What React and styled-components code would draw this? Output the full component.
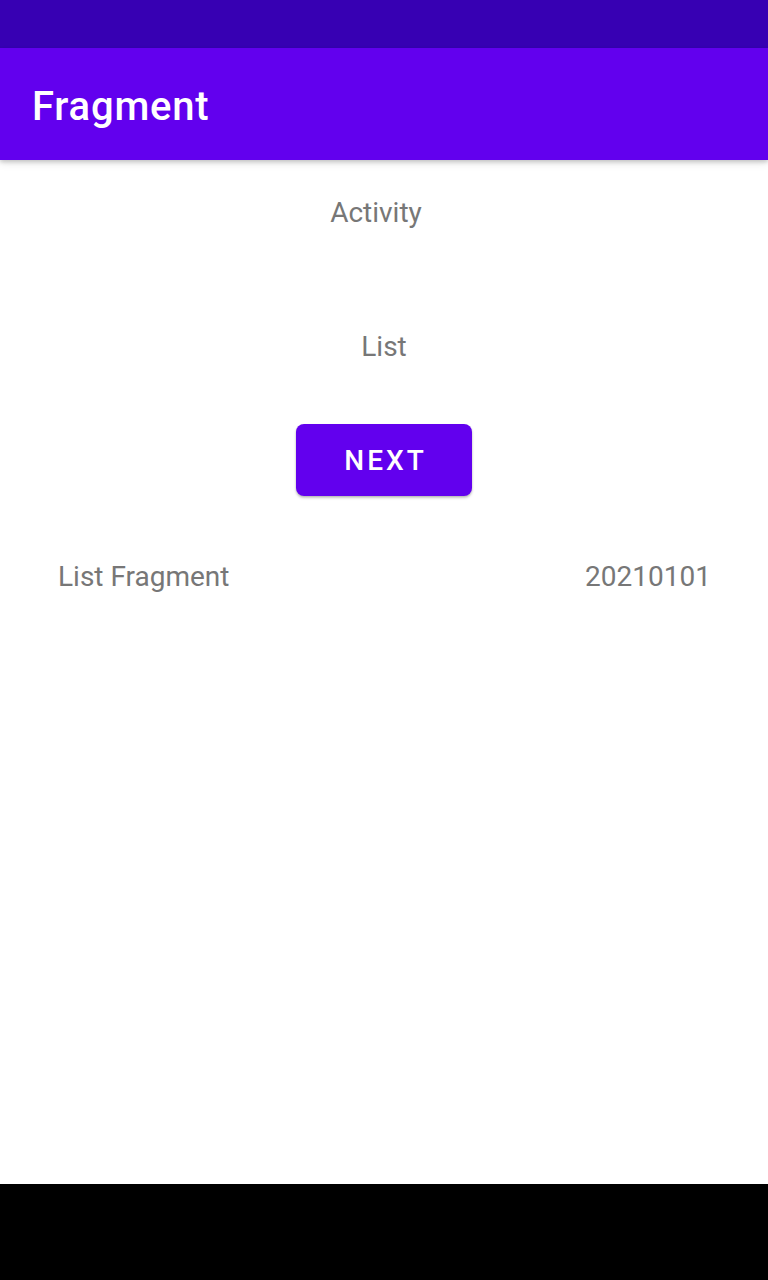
import styled, { createGlobalStyle } from 'styled-components'

const GlobalStyle = createGlobalStyle`
  html, body {
    margin: 0;
    padding: 0;
    background: #ffffff;
  }
  body {
    font-family: Roboto, "Noto Sans", "Liberation Sans", sans-serif;
    -webkit-font-smoothing: antialiased;
  }
`

const App = () => {
  return (
    <Screen>
      <GlobalStyle />
      <StatusBar />
      <AppBar>
        <Title>Fragment</Title>
      </AppBar>

      <Content>
        <Label $shift={8} $top={37}>Activity</Label>
        <Label $top={102}>List</Label>

        <ButtonRow>
          <NextButton type="button">Next</NextButton>
        </ButtonRow>

        <ItemRow>
          <ItemText>List Fragment</ItemText>
          <ItemText>20210101</ItemText>
        </ItemRow>
      </Content>

      <NavBar />
    </Screen>
  )
}
export default App

const Screen = styled.div`
  width: 768px;
  height: 1280px;
  display: flex;
  flex-direction: column;
  overflow: hidden;
  background: #ffffff;
`

const StatusBar = styled.div`
  height: 48px;
  flex-shrink: 0;
  background-color: #3700b3;
`

const AppBar = styled.header`
  height: 112px;
  flex-shrink: 0;
  background-color: #6200ee;
  display: flex;
  align-items: center;
  padding: 6px 32px 0;
  box-sizing: border-box;
  box-shadow: 0 2px 4px rgba(0, 0, 0, 0.18), 0 4px 8px rgba(0, 0, 0, 0.08);
  position: relative;
  z-index: 1;
`

const Title = styled.h1`
  margin: 0;
  color: #ffffff;
  font-size: 40px;
  font-weight: 500;
  line-height: 48px;
  letter-spacing: 0.8px;
`

const Content = styled.main`
  flex: 1;
  display: flex;
  flex-direction: column;
`

const Label = styled.p`
  margin: ${(p) => p.$top || 0}px 0 0;
  padding-right: ${(p) => (p.$shift || 0) * 2}px;
  text-align: center;
  color: #777777;
  font-size: 28px;
  line-height: 32px;
`

const ButtonRow = styled.div`
  display: flex;
  justify-content: center;
  margin-top: 61px;
`

const NextButton = styled.button`
  width: 176px;
  height: 72px;
  border: none;
  border-radius: 8px;
  background-color: #6200ee;
  color: #ffffff;
  font-family: Roboto, "Noto Sans", sans-serif;
  font-size: 28px;
  font-weight: 500;
  letter-spacing: 3px;
  text-transform: uppercase;
  padding: 0 0 0 3px;
  box-shadow: 0 2px 3px rgba(0, 0, 0, 0.2), 0 1px 2px rgba(0, 0, 0, 0.12);
  cursor: pointer;
`

const ItemRow = styled.div`
  display: flex;
  justify-content: space-between;
  align-items: center;
  margin-top: 65px;
  padding: 0 57px 0 58px;
`

const ItemText = styled.span`
  color: #777777;
  font-size: 28px;
  line-height: 32px;
`

const NavBar = styled.div`
  height: 96px;
  flex-shrink: 0;
  background-color: #000000;
`
